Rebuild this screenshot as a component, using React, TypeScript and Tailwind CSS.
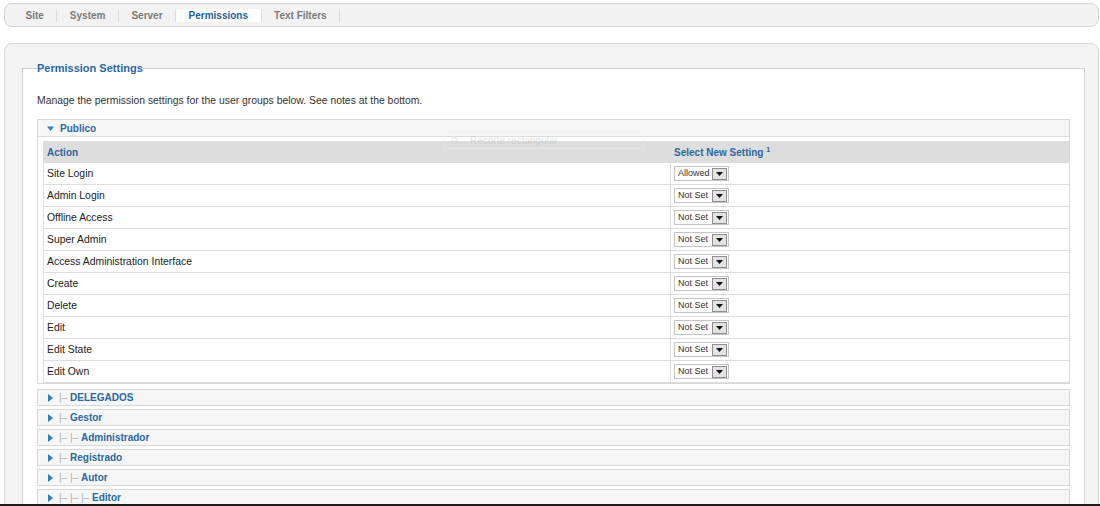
import React from "react"

const tabs = ["Site", "System", "Server", "Permissions", "Text Filters"]

const actions: [string, string][] = [
  ["Site Login", "Allowed"],
  ["Admin Login", "Not Set"],
  ["Offline Access", "Not Set"],
  ["Super Admin", "Not Set"],
  ["Access Administration Interface", "Not Set"],
  ["Create", "Not Set"],
  ["Delete", "Not Set"],
  ["Edit", "Not Set"],
  ["Edit State", "Not Set"],
  ["Edit Own", "Not Set"],
]

const groups = [
  { name: "DELEGADOS", level: 1 },
  { name: "Gestor", level: 1 },
  { name: "Administrador", level: 2 },
  { name: "Registrado", level: 1 },
  { name: "Autor", level: 2 },
  { name: "Editor", level: 3 },
]

function SettingSelect({ value }: { value: string }) {
  return (
    <div className="flex h-[15px] w-[55px] items-center border border-[#c4c4c4] bg-white">
      <span className="flex-1 pl-[3px] text-[9px] leading-none text-[#333]">{value}</span>
      <span className="mr-[1px] flex h-[12px] w-[15px] items-center justify-center border border-[#8f8f8f] bg-[#e3e3e3]">
        <svg width="7" height="4" viewBox="0 0 7 4" aria-hidden="true">
          <path d="M0 0h7L3.5 4z" fill="#111" />
        </svg>
      </span>
    </div>
  )
}

function Caret({ open }: { open?: boolean }) {
  return open ? (
    <svg width="7" height="5" viewBox="0 0 7 5" className="mr-[6px]" aria-hidden="true">
      <path d="M0 0.5h7L3.5 5z" fill="#2f7cc2" />
    </svg>
  ) : (
    <svg width="5" height="8" viewBox="0 0 5 8" className="mr-[6px]" aria-hidden="true">
      <path d="M0 0l5 4-5 4z" fill="#2f7cc2" />
    </svg>
  )
}

export default function App() {
  return (
    <div className="relative h-[506px] overflow-hidden bg-white font-['Liberation_Sans',Arial,sans-serif]">
      {/* ── Tabs ── */}
      <div className="ml-[4px] mr-[1px] mt-[3px] flex h-[24px] items-center rounded-[8px] border border-[#d6d6d6] bg-[#f2f2f2] pl-[8px]">
        {tabs.map((t) => (
          <div key={t} className="flex h-[13px] items-center border-r border-[#dcdcdc]">
            <span
              className={
                t === "Permissions"
                  ? "flex h-[13px] items-center bg-white px-[12.5px] text-[10px] font-bold text-[#245f95]"
                  : "px-[12.5px] text-[10px] font-bold text-[#7a7a7a]"
              }
            >
              {t}
            </span>
          </div>
        ))}
      </div>

      {/* ── Panel ── */}
      <div className="ml-[4px] mr-[1px] mt-[16px] h-[600px] rounded-[8px] border border-[#d9d9d9] bg-[#f3f3f3] pl-[17px] pr-[13px] pt-[17px]">
        <fieldset className="h-[560px] border border-[#d2d2d2] bg-white px-[14px]">
          <legend className="px-0 text-[11px] font-bold leading-[14px] text-[#2a67a0]">Permission Settings</legend>
          <p className="mt-[19px] text-[10.4px] leading-[14px] text-[#333]">
            Manage the permission settings for the user groups below. See notes at the bottom.
          </p>

          {/* Publico (open) */}
          <div className="mt-[11px] border border-[#d8d8d8]">
            <div className="flex h-[17px] items-center border-b border-[#dcdcdc] bg-[#f6f6f6] pl-[9px]">
              <Caret open />
              <span className="text-[10px] font-bold text-[#2a67a0]">Publico</span>
            </div>
            <div className="pl-[5px] pt-[4px]">
              <div className="grid h-[22px] grid-cols-[627px_1fr] items-center bg-[#dddddd]">
                <span className="pl-[4px] text-[10px] font-bold text-[#2a67a0]">Action</span>
                <span className="pl-[4px] text-[10px] font-bold text-[#2a67a0]">
                  Select New Setting <sup className="text-[7px]">1</sup>
                </span>
              </div>
              {actions.map(([label, value]) => (
                <div
                  key={label}
                  className="grid h-[22px] grid-cols-[627px_1fr] border-b border-l border-[#dddddd]"
                >
                  <span className="flex items-center border-r border-[#dddddd] pl-[3px] text-[10.4px] text-[#222]">
                    {label}
                  </span>
                  <div className="flex items-center pl-[3px]">
                    <SettingSelect value={value} />
                  </div>
                </div>
              ))}
            </div>
          </div>

          {/* Collapsed groups */}
          <div className="mt-[5px]">
            {groups.map((g) => (
              <div
                key={g.name}
                className="mb-[3px] flex h-[17px] items-center border border-[#d8d8d8] bg-[#f6f6f6] pl-[10px]"
              >
                <Caret />
                {Array.from({ length: g.level }).map((_, i) => (
                  <span key={i} className="inline-block w-[11px] text-[10px] text-[#b0b0b0]">
                    |–
                  </span>
                ))}
                <span className="text-[10px] font-bold text-[#2a67a0]">{g.name}</span>
              </div>
            ))}
          </div>
        </fieldset>
      </div>

      {/* faint screen-capture hint over the table header */}
      <div className="absolute left-[444px] top-[132px] flex h-[17px] w-[200px] items-center gap-[12px] border border-[#eeeeee] pl-[6px] opacity-40">
        <span className="h-[7px] w-[7px] rounded-full border border-[#bbbbbb]" />
        <span className="text-[10px] text-[#bbbbbb]">Recorte rectangular</span>
      </div>

      {/* bottom edge of the capture */}
      <div className="absolute bottom-0 left-0 right-0 h-[2px] bg-[#1c1c1c]" />
    </div>
  )
}
